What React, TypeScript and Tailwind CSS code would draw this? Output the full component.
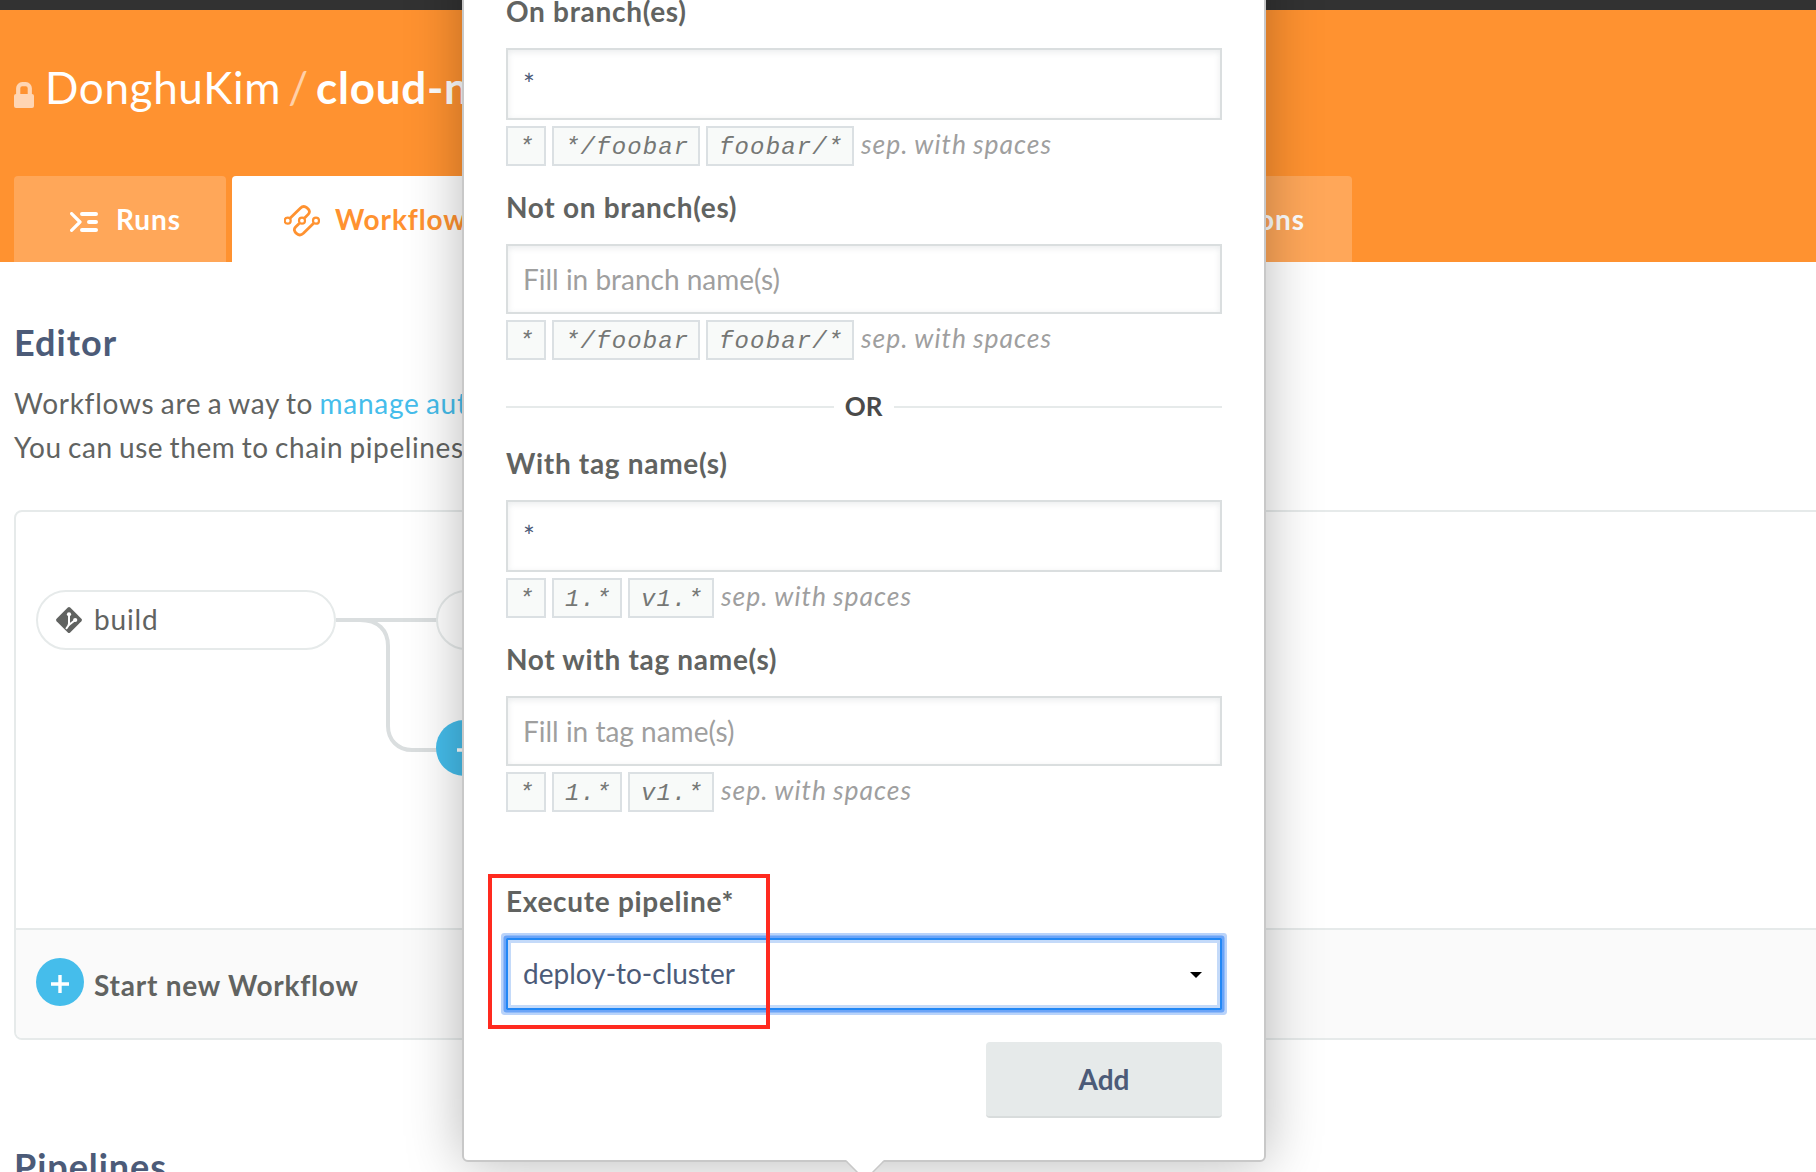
import type { ReactNode } from "react";

function LockIcon() {
  return (
    <svg width="20" height="26" viewBox="0 0 20 26" fill="none">
      <path d="M4.2 13V6.2a4 4 0 0 1 4-4h3.6a4 4 0 0 1 4 4V13" stroke="#ffd5b3" strokeWidth="4.2" />
      <rect y="12" width="20" height="14" rx="2" fill="#ffd5b3" />
    </svg>
  );
}

function RunsIcon() {
  return (
    <svg width="28" height="20" viewBox="0 0 28 20" fill="none" stroke="#fff" strokeLinecap="round" strokeLinejoin="round">
      <path d="M1.6 1.6 10 10l-8.4 8.4" strokeWidth="3.2" />
      <path d="M12 2h14M19 10h7M12 18h14" strokeWidth="4" />
    </svg>
  );
}

function WorkflowIcon() {
  return (
    <svg width="36" height="32" viewBox="284 206 36 32" fill="none" stroke="#ff9230">
      <path
        d="M290.3 219.1 300.3 209.2Q303.6 206 307 208.8Q311.2 212.2 308.2 215.4L304.6 219.1M313.4 224.4 303.4 234.3Q300.1 237.4 296.7 234.6Q292.6 231.2 295.6 228L299.2 224.4"
        strokeWidth="2.8"
      />
      <circle cx="287.7" cy="221.7" r="3" strokeWidth="2.2" />
      <circle cx="302" cy="221.7" r="3" strokeWidth="2.2" />
      <circle cx="316" cy="221.7" r="3" strokeWidth="2.2" />
    </svg>
  );
}

function GitIcon() {
  return (
    <svg width="26" height="26" viewBox="0 0 26 26">
      <path
        d="M11.8.6a1.8 1.8 0 0 1 2.4 0l11.2 11.2a1.8 1.8 0 0 1 0 2.4L14.2 25.4a1.8 1.8 0 0 1-2.4 0L.6 14.2a1.8 1.8 0 0 1 0-2.4z"
        fill="#616361"
      />
      <g fill="none" stroke="#fff" strokeWidth="2" strokeLinecap="round">
        <path d="M13 7.3V16.5Q13 18.5 10.5 21.3" />
        <path d="M19.2 13 13.2 17.8" />
      </g>
      <circle cx="13" cy="7.3" r="2.1" fill="#fff" />
      <circle cx="19.2" cy="13" r="2.1" fill="#fff" />
    </svg>
  );
}

function PlusIcon() {
  return (
    <svg width="18" height="18" viewBox="0 0 18 18" stroke="#fff" strokeWidth="3.4">
      <path d="M9 0v18M0 9h18" />
    </svg>
  );
}

const label = "h-[34px] text-[28px] leading-[34px] font-bold tracking-[0.69px] whitespace-nowrap text-[#616361]";

function Chip({ text, width }: { text: string; width: string }) {
  return (
    <code
      className={`${width} mr-1.5 block h-10 border-2 border-[#dbe0e3] bg-[#f8faf9] pt-px pl-[11px] font-['Liberation_Mono',monospace] text-[24px] leading-[38px] tracking-[1.15px] whitespace-nowrap text-[#757775] italic`}
    >
      {text}
    </code>
  );
}

function Field({ title, value, placeholder, chips, className }: {
  title: string;
  value?: string;
  placeholder?: string;
  chips: [string, string][];
  className?: string;
}) {
  return (
    <div className={className}>
      <div className={label}>{title}</div>
      <div
        className={`mt-5 border-2 border-[#dadedf] pr-3.5 pl-[15px] text-[28px] leading-[34px] shadow-[inset_0_2px_6px_rgba(80,100,110,0.12)] ${
          value ? "h-[72px] pt-[17px] text-[#4c5b78]" : "h-[70px] pt-4 text-[#9f9f9f]"
        }`}
      >
        {value ?? placeholder}
      </div>
      <div className="mt-1.5 flex h-10">
        {chips.map(([text, width]) => (
          <Chip key={text} text={text} width={width} />
        ))}
        <span className="ml-px text-[26.5px] leading-[37px] tracking-[1px] [word-spacing:-1.2px] whitespace-nowrap text-[#9f9f9f] italic">
          sep. with spaces
        </span>
      </div>
    </div>
  );
}

const branchChips: [string, string][] = [["*", "w-[40px]"], ["*/foobar", "w-[148px]"], ["foobar/*", "w-[148px]"]];
const tagChips: [string, string][] = [["*", "w-[40px]"], ["1.*", "w-[70px]"], ["v1.*", "w-[86px]"]];

function Tab({ icon, children, className }: { icon?: ReactNode; children: ReactNode; className: string }) {
  return (
    <div className={`flex h-[86px] items-center rounded-t-[4px] text-[28px] font-bold tracking-[0.9px] whitespace-nowrap ${className}`}>
      {icon}
      {children}
    </div>
  );
}

function Popover() {
  return (
    <div className="absolute -top-[100px] left-[462px] h-[1262px] w-[804px] rounded-[6px] border-2 border-[#c8c8c8] bg-white px-[42px] pt-[92px] shadow-[0_1px_56px_rgba(0,0,0,0.28)]">
      <Field title="On branch(es)" value="*" chips={branchChips} />
      <Field title="Not on branch(es)" placeholder="Fill in branch name(s)" chips={branchChips} className="mt-6" />
      <div className="flex h-[86px] items-center">
        <div className="mt-2 h-0.5 flex-1 bg-[#e6eaea]" />
        <div className="mt-[5px] w-[60px] pr-px text-center text-[26px] leading-8 font-bold text-[#4a4a4a]">OR</div>
        <div className="mt-2 h-0.5 flex-1 bg-[#e6eaea]" />
      </div>
      <Field title="With tag name(s)" value="*" chips={tagChips} />
      <Field title="Not with tag name(s)" placeholder="Fill in tag name(s)" chips={tagChips} className="mt-6" />

      <div className={`${label} mt-[72px]`}>Execute pipeline*</div>
      <div className="mt-5 flex h-[72px] items-start justify-between rounded-[1px] border-2 border-[#2288f5] pt-4 pr-3.5 pl-[15px] text-[28px] leading-[34px] text-[#4c5b78] shadow-[inset_0_0_0_3px_#c4daf9,0_0_0_2.5px_#6ba4f7,0_0_0_5px_#b9d3fa]">
        <span>deploy-to-cluster</span>
        <svg className="mt-4 mr-[4px]" width="12" height="6" viewBox="0 0 12 6">
          <path d="M0 0h12L6 6z" fill="#000" />
        </svg>
      </div>
      <div className="mt-8 flex justify-end">
        <button className="h-[76px] w-[236px] rounded-[4px] border-b-2 border-[#d8dcdc] bg-[#e6eaea] pb-px text-[28px] font-bold text-[#4c5b78]">
          Add
        </button>
      </div>

      <svg className="absolute top-[1258px] left-[382px]" width="38" height="20" viewBox="0 0 38 20">
        <path d="M0 0H38L19 19z" fill="#fff" />
        <path d="M0 1 19 20 38 1" fill="none" stroke="#c8c8c8" strokeWidth="1.4" />
      </svg>

      <div className="absolute top-[972px] left-6 h-[155px] w-[282px] border-4 border-[#ff2a1f]" />
    </div>
  );
}

export default function App() {
  return (
    <div className="relative h-[1172px] w-[1816px] overflow-hidden bg-white font-['Lato',sans-serif] text-[#616361]">
      <div className="h-2.5 bg-[#323232]" />
      <header className="flex h-[252px] flex-col justify-between bg-[#ff9230] px-3.5">
        <div className="mt-[51px] flex h-[53px] text-[44px] leading-[53px] tracking-[0.75px] whitespace-nowrap text-white">
          <div className="mt-[21px] mr-[11px]">
            <LockIcon />
          </div>
          <span className="w-[236px] tracking-[0.65px]">DonghuKim</span>
          <span className="w-[35px] text-center text-[#ffd0a8]">/</span>
          <span className="font-bold">cloud-native</span>
        </div>
        <nav className="flex w-[1338px] gap-1.5">
          <Tab icon={<div className="mt-1.5 mr-[18px]"><RunsIcon /></div>} className="w-[212px] bg-[#ffa759] pl-14 text-white">
            Runs
          </Tab>
          <Tab icon={<div className="mt-1 mr-[15px]"><WorkflowIcon /></div>} className="w-[312px] bg-white pl-[52px] text-[#ff9230]">
            Workflows
          </Tab>
          <Tab className="flex-1 justify-center bg-[#ffa759] text-white">Environment</Tab>
          <Tab className="w-[250px] justify-end bg-[#ffa759] pr-[47px] text-white">Options</Tab>
        </nav>
      </header>

      <main className="pl-3.5">
        <h1 className="mt-[58px] h-11 text-[36px] leading-[44px] font-bold tracking-[1.05px] text-[#4c5b78]">Editor</h1>
        <p className="mt-[17px] text-[28px] leading-[44px] tracking-[0.6px] [word-spacing:-1.5px] whitespace-nowrap">
          <span className="tracking-[0.73px]">
            Workflows are a way to <span className="text-[#45bdeb]">manage automation</span>
          </span>
          <br />
          You can use them to chain pipelines
        </p>

        <section className="mt-[41px] h-[530px] w-[2000px] overflow-hidden rounded-lg border-2 border-[#e6eaea]">
          <div className="relative h-[416px]">
            <svg className="absolute top-0 left-0" width="480" height="416" viewBox="16 512 480 416" fill="none" stroke="#dadedf" strokeWidth="4">
              <path d="M336 620H438M360 620C378 620 388 630 388 646V726C388 740 398 750 412 750H438" />
            </svg>
            <div className="absolute top-[78px] left-5 flex h-[60px] w-[300px] items-center rounded-full border-2 border-[#e6eaea] bg-white pl-[18px] text-[28px] tracking-[0.85px]">
              <GitIcon />
              <span className="-mt-0.5 ml-[12px]">build</span>
            </div>
            <div className="absolute top-[78px] left-[420px] h-[60px] w-[300px] rounded-full border-2 border-[#e6eaea] bg-white" />
            <div className="absolute top-[208px] left-[420px] flex size-14 items-center justify-center rounded-full bg-[#45bdeb] pt-1 pl-1">
              <PlusIcon />
            </div>
          </div>
          <div className="flex h-[112px] items-start border-t-2 border-[#e6eaea] bg-[#fafafa] pl-5">
            <div className="mt-7 flex size-12 items-center justify-center rounded-full bg-[#45bdeb] pt-1">
              <PlusIcon />
            </div>
            <span className="mt-[38px] ml-[10px] text-[28px] leading-[34px] font-bold tracking-[0.78px]">Start new Workflow</span>
          </div>
        </section>

        <h2 className="mt-[104px] text-[36px] leading-[44px] font-bold tracking-[0.95px] text-[#4c5b78]">Pipelines</h2>
      </main>

      <Popover />
    </div>
  );
}
